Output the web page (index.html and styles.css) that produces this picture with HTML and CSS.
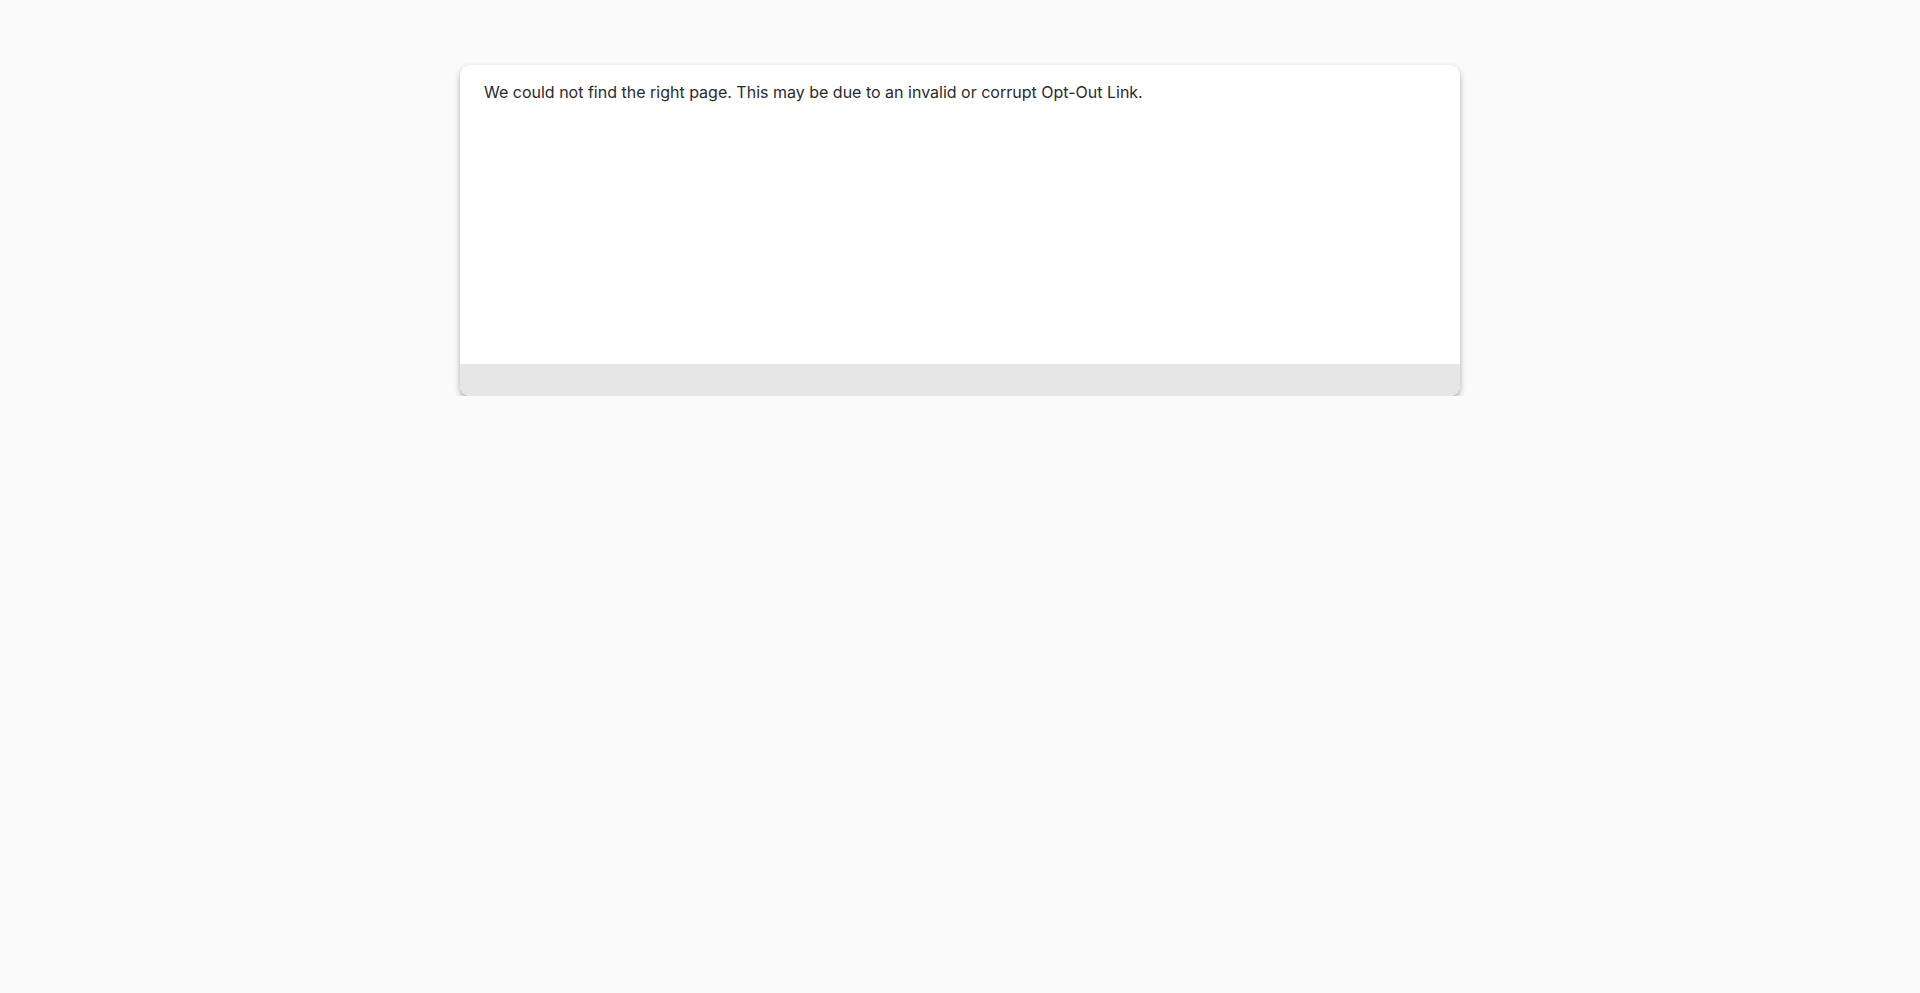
FILE: index.html
```html
<!DOCTYPE html>
<html lang="en">
<head>
<meta charset="utf-8">
<title>Opt-Out</title>
<link rel="stylesheet" href="styles.css">
</head>
<body>
<main class="page">
  <section class="card">
    <div class="card-body">
      <p class="message">We could not find the right page. This may be due to an invalid or corrupt Opt-Out Link.</p>
    </div>
    <div class="card-footer"></div>
  </section>
</main>
</body>
</html>
```

FILE: styles.css
```css
html, body {
  margin: 0;
  padding: 0;
  background: #fafafa;
  font-family: Inter, "Noto Sans", "Liberation Sans", sans-serif;
  color: #222;
}

.page {
  display: flex;
  justify-content: center;
  padding-top: 65px;
}

.card {
  width: 1000px;
  background: #ffffff;
  border-radius: 10px;
  overflow: hidden;
  box-shadow: 0 4px 6px rgba(0, 0, 0, 0.28), 0 0 4px rgba(0, 0, 0, 0.06);
  display: flex;
  flex-direction: column;
}

.card-body {
  height: 299px;
  box-sizing: border-box;
  padding: 15px 24px;
}

.message {
  margin: 0;
  font-size: 16px;
  line-height: 24px;
  color: #2a2a2a;
}

.card-footer {
  height: 32px;
  background: #e6e6e6;
}
```
